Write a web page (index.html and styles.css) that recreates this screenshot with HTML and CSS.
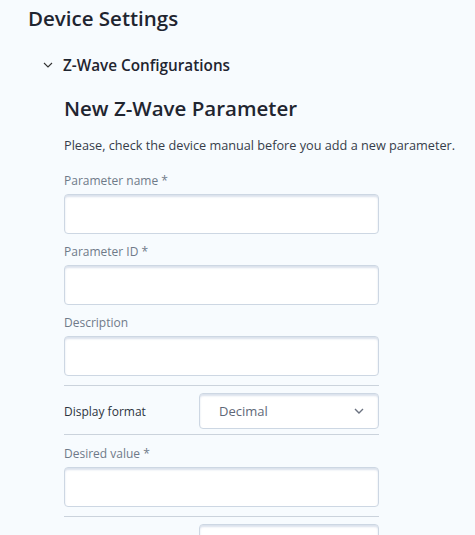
FILE: index.html
```html
<!DOCTYPE html>
<html>
<head>
<meta charset="utf-8">
<link rel="stylesheet" href="styles.css">
</head>
<body>
<div class="page">
  <h1 class="page-title">Device Settings</h1>
  <div class="section">
    <div class="section-head">
      <svg class="chev" width="10" height="6" viewBox="0 0 10 6"><path d="M1 1l4 4 4-4" fill="none" stroke="#333" stroke-width="1.1"/></svg>
      <span class="section-title">Z-Wave Configurations</span>
    </div>
    <div class="section-body">
      <h2 class="form-title">New Z-Wave Parameter</h2>
      <p class="hint">Please, check the device manual before you add a new parameter.</p>
      <div class="field">
        <label class="label">Parameter name *</label>
        <div class="input"></div>
      </div>
      <div class="field">
        <label class="label">Parameter ID *</label>
        <div class="input"></div>
      </div>
      <div class="field">
        <label class="label">Description</label>
        <div class="input"></div>
      </div>
      <div class="row">
        <span class="row-label">Display format</span>
        <div class="select"><span>Decimal</span>
          <svg width="10" height="6" viewBox="0 0 10 6"><path d="M1 1l4 4 4-4" fill="none" stroke="#6b7280" stroke-width="1.4"/></svg>
        </div>
      </div>
      <div class="field field-after-row">
        <label class="label">Desired value *</label>
        <div class="input"></div>
      </div>
      <div class="row row-last">
        <span class="row-label"></span>
        <div class="select"></div>
      </div>
    </div>
  </div>
</div>
</body>
</html>
```
FILE: styles.css
```css
html, body {
  margin: 0;
  padding: 0;
  background: #f7fbfe;
  font-family: "Open Sans", "Noto Sans", sans-serif;
  color: #222831;
  overflow: hidden;
  height: 535px;
}
.page {
  padding: 4px 0 0 28px;
}
.page-title {
  margin: 0;
  font-size: 20.5px;
  font-weight: 600;
  line-height: 28px;
  color: #1f2530;
}
.section-head {
  display: flex;
  align-items: center;
  margin-top: 23px;
  padding-left: 15px;
  height: 20px;
}
.chev {
  margin-right: 10px;
}
.section-title {
  font-size: 15.3px;
  font-weight: 600;
  color: #1f2530;
}
.section-body {
  padding-left: 36px;
  width: 315px;
}
.form-title {
  margin: 19px 0 0;
  font-size: 20.5px;
  font-weight: 600;
  line-height: 28px;
  color: #1f2530;
}
.hint {
  margin: 14px 0 0;
  font-size: 12.7px;
  line-height: 18px;
  color: #363d4a;
  white-space: nowrap;
}
.field {
  display: flex;
  flex-direction: column;
  margin-top: 19px;
}
.field + .field {
  margin-top: 10px;
}
.label {
  font-size: 12px;
  line-height: 16px;
  color: #6f7a89;
  margin-bottom: 5px;
}
.input {
  height: 38px;
  background: #fff;
  border: 1px solid #cdd7e3;
  border-radius: 4px;
  box-shadow: inset 0 2px 2px rgba(150, 170, 200, 0.35);
}
.row {
  display: flex;
  align-items: center;
  border-top: 1px solid #cbd3dc;
  border-bottom: 1px solid #cbd3dc;
  margin-top: 9px;
  padding: 7px 0 5px;
}
.row-label {
  width: 135px;
  font-size: 12px;
  color: #2d3440;
}
.select {
  flex: 1;
  height: 34px;
  background: #fff;
  border: 1px solid #cdd7e3;
  border-radius: 4px;
  box-shadow: inset 0 2px 2px rgba(150, 170, 200, 0.35);
  display: flex;
  align-items: center;
  justify-content: space-between;
  padding: 0 14px 0 19px;
  font-size: 13px;
  color: #5f6878;
}
.field-after-row {
  margin-top: 11px;
}
.row-last {
  border-bottom: none;
  margin-top: 9px;
}
```
